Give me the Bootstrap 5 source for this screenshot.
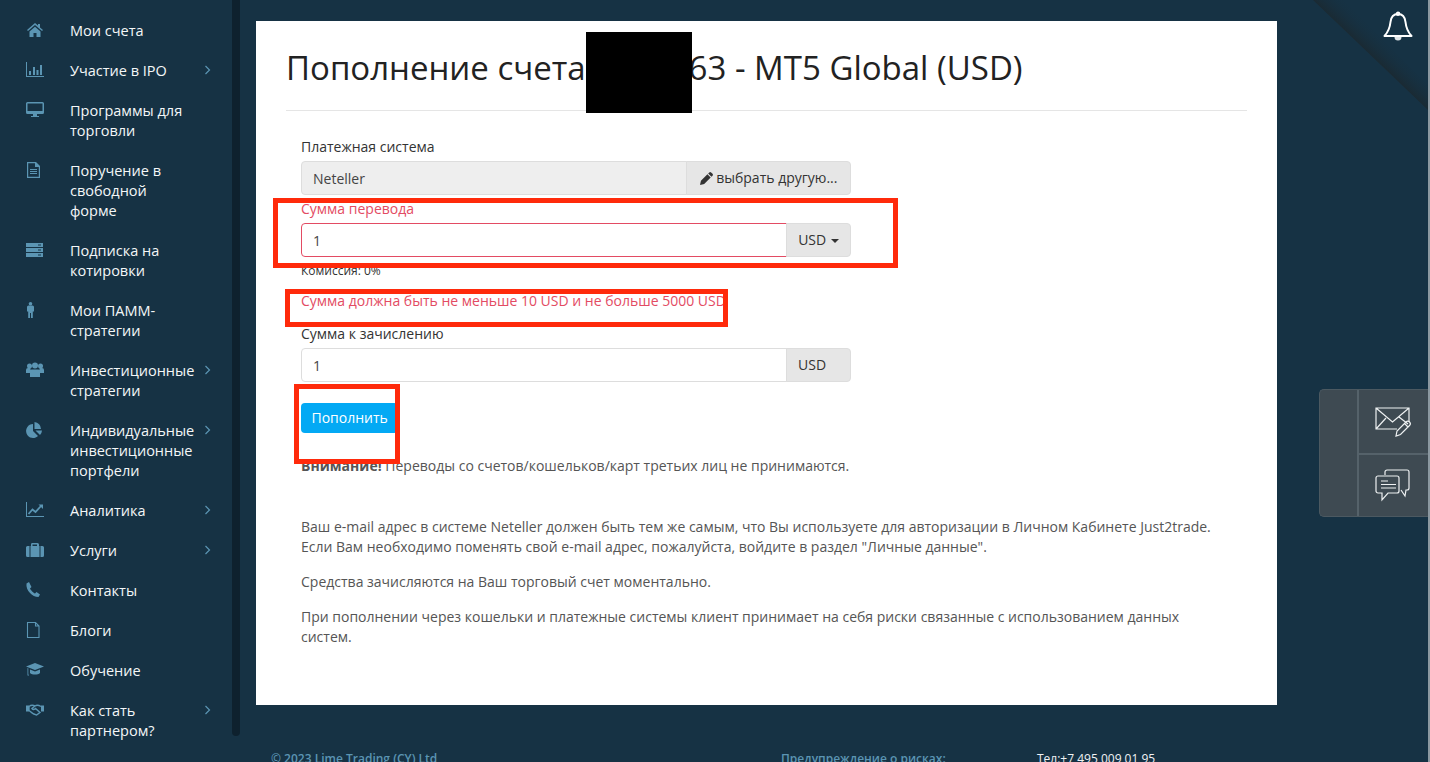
<!DOCTYPE html>
<html lang="ru">
<head>
  <meta charset="UTF-8" />
  <meta name="viewport" content="width=device-width, initial-scale=1" />
  <title>Пополнение счета</title>
  <link href="https://cdn.jsdelivr.net/npm/bootstrap@5.3.3/dist/css/bootstrap.min.css" rel="stylesheet" />
  <style>
    html, body { height: 762px; overflow: hidden; }
    body { background: #163244; font-family: "Open Sans", sans-serif; font-size: 14px; line-height: 20px; color: #333; }
    .app-shell { height: 762px; position: relative; overflow: hidden; border-right: 2px solid #8b98a0; }
    .side-col { width: 240px; height: 762px; flex: none; overflow: hidden; position: relative; }
    .side-list { list-style: none; margin: 0; padding: 11px 0 0; width: 232px; }
    .side-link { display: flex; padding: 10px 0 10px 26px; color: #f4f7f8; font-size: 14.5px; line-height: 20px; text-decoration: none; position: relative; }
    .side-ico { width: 44px; flex: none; color: #5b95b3; padding-top: 1px; }
    .side-ico svg { display: block; width: 18px; height: 16px; }
    .side-label { width: 126px; }
    .side-arrow { position: absolute; left: 204px; top: 14px; width: 7px; height: 10px; }
    .side-scroll { position: absolute; left: 232px; top: 0; width: 8px; height: 736px; background: #0e212e; border-radius: 0 0 4px 4px; }
    .main-col { flex: 1 1 auto; padding: 21px 151px 0 16px; }
    .pay-card { background: #fff; height: 684px; padding: 0 30px; position: relative; }
    .pay-title { font-family: "Open Sans", sans-serif; font-size: 33px; line-height: 46px; font-weight: 400; margin: 0; padding: 24px 0 19px; border-bottom: 1px solid #e5e5e5; color: #222; }
    .pay-form { width: 550px; margin: 0 0 0 15px; padding-top: 26px; }
    .pay-label { display: block; margin: 0 0 4px; line-height: 20px; }
    .pay-group { margin-bottom: 4px; }
    .pay-group .form-control, .pay-group .input-group-text, .pay-group .btn { font-size: 14px; line-height: 20px; height: 34px; padding: 6px 11px; border-radius: 4px; border-color: #ddd; }
    .pay-group .form-control { color: #444; box-shadow: none; }
    .pay-group .form-control[readonly] { background: #eee; }
    .pay-group .btn, .pay-group .input-group-text { background: #e6e6e6; color: #333; }
    .pay-pick { width: 165px; }
    .pay-cur { width: 65px; justify-content: flex-start; }
    .pay-red, .pay-red .pay-label { color: #e34b63; }
    .pay-group .pay-bad { border-color: #e34b63; }
    .pay-fee { font-size: 12px; line-height: 16px; margin: 6px 0 0; }
    .pay-error { color: #e34b63; margin: 12px 0 13px; }
    .pay-submit { background: #03a9f4; color: #fff; font-size: 14px; line-height: 20px; padding: 5px 10.5px; border: 0; border-radius: 4px; margin: 21px 0 23px; display: block; }
    .pay-note { color: #555; width: 915px; margin: 0 0 15px 15px; }
    .pay-gap { margin-top: 41px; }
    .pen-ico { width: 13px; height: 13px; vertical-align: -2px; }
    .caret-mark { display: inline-block; border-top: 4px solid #333; border-left: 4px solid transparent; border-right: 4px solid transparent; vertical-align: 2px; margin-left: 1px; }
    .mark-box { position: absolute; border: 5px solid #ff2a0b; pointer-events: none; }
    .mark-one { left: 17px; top: 177px; width: 625px; height: 70px; }
    .mark-two { left: 29px; top: 268px; width: 443px; height: 38px; }
    .mark-three { left: 38px; top: 363px; width: 106px; height: 80px; }
    .black-box { position: absolute; left: 330px; top: 11px; width: 106px; height: 81px; background: #000; }
    .foot-row { display: flex; font-size: 12px; line-height: 16px; font-weight: 600; color: #5b95b3; padding: 46px 0 0 15px; white-space: nowrap; }
    .foot-copy { width: 510px; }
    .foot-warn { width: 256px; }
    .foot-tel { color: #f0f3f5; font-weight: 400; }
    .corner-fold { position: absolute; right: 0; top: 0; width: 115px; height: 110px; pointer-events: none; }
    .bell-ico { position: absolute; left: 1383px; top: 11px; width: 30px; height: 32px; }
    .tool-box { position: absolute; left: 1319px; top: 389px; width: 109px; height: 128px; background: #3e4a52; border: 1px solid #4c5961; border-right: 0; border-radius: 5px 0 0 5px; display: flex; }
    .tool-edge { width: 39px; border-right: 2px solid #55626a; }
    .tool-btns { flex: 1 1 auto; display: flex; flex-direction: column; }
    .tool-btn { height: 63px; display: flex; align-items: center; justify-content: center; padding-right: 2px; }
    .tool-btn + .tool-btn { border-top: 2px solid #55626a; }
  </style>
</head>
<body>

<svg width="0" height="0" class="position-absolute">
  <symbol id="i-home" viewBox="0 0 18 16"><path fill="currentColor" d="M9 1 1 8l1 1 7-6 7 6 1-1-3-2.6V2h-2v1.6zM3.500 9.500 9 4.700l5.500 4.800V15h-4v-4h-3v4h-4z"/></symbol>
  <symbol id="i-bars" viewBox="0 0 18 16"><path fill="currentColor" d="M0 0h1v14h17v1H0zM3 9h2v4H3zM7 5h2v8H7zM10.500 8h2v5h-2zM14 3h2v10h-2z"/></symbol>
  <symbol id="i-screen" viewBox="0 0 18 16"><path fill="currentColor" fill-rule="evenodd" d="M1.500 0h15A1.500 1.500 0 0 1 18 1.500v9a1.500 1.500 0 0 1-1.500 1.500H11v2h2v1H5v-1h2v-2H1.500A1.500 1.500 0 0 1 0 10.500v-9A1.500 1.500 0 0 1 1.500 0zM1.500 1.500V9h15V1.500z"/></symbol>
  <symbol id="i-doc" viewBox="0 0 18 16"><path fill="currentColor" fill-rule="evenodd" d="M1 0h9l4 4v12H1zM2.200 1.200v13.600h10.600V5H9V1.200zM4 7h7v1H4zM4 9h7v1H4zM4 11h7v1H4z"/></symbol>
  <symbol id="i-rows" viewBox="0 0 18 16"><path fill="currentColor" fill-rule="evenodd" d="M0 1h17v4H0zM12 2.500v1h3v-1zM0 6h17v4H0zM12 7.500v1h3v-1zM0 11h17v4H0zM12 12.500v1h3v-1z"/></symbol>
  <symbol id="i-man" viewBox="0 0 18 16"><circle cx="4.500" cy="1.800" r="1.800" fill="currentColor"/><path fill="currentColor" d="M1 5a1.500 1.500 0 0 1 1.500-1.500h4A1.500 1.500 0 0 1 8 5v4.500H6.800V16H5v-5H4v5H2.200V9.500H1z"/></symbol>
  <symbol id="i-group" viewBox="0 0 18 16"><circle cx="3.500" cy="4" r="2.500" fill="currentColor"/><circle cx="14.500" cy="4" r="2.500" fill="currentColor"/><circle cx="9" cy="3.500" r="3" fill="currentColor"/><path fill="currentColor" d="M0 8a2 2 0 0 1 2-2h2.500v5H0zM13.500 6H16a2 2 0 0 1 2 2v3h-4.500zM5.500 7.500h7A1.500 1.500 0 0 1 14 9v6H4V9a1.500 1.500 0 0 1 1.500-1.500z"/></symbol>
  <symbol id="i-pie" viewBox="0 0 18 16"><path fill="currentColor" d="M7 2v7l5 5A7 7 0 1 1 7 2zM8.500 0a7 7 0 0 1 6.500 7H8.500zM9.500 8.500H16a7 7 0 0 1-2 4.500z"/></symbol>
  <symbol id="i-line" viewBox="0 0 18 16"><path fill="currentColor" d="M0 0h1v14h17v1H0z"/><path fill="none" stroke="currentColor" stroke-width="1.800" d="m2.500 12 4-4.500 3 2.500 5.500-6"/><path fill="currentColor" d="M12.500 2.500H17V7z"/></symbol>
  <symbol id="i-case" viewBox="0 0 18 16"><path fill="currentColor" fill-rule="evenodd" d="M6 1h5.500A1.500 1.500 0 0 1 13 2.500V4h3.500A1.500 1.500 0 0 1 18 5.500v8a1.500 1.500 0 0 1-1.500 1.500h-15A1.500 1.500 0 0 1 0 13.500v-8A1.500 1.500 0 0 1 1.500 4H5V2.500A1.500 1.500 0 0 1 6 1zM6.500 2.500V4h4.500V2.500zM3.500 4v11h1V4zM13.500 4v11h1V4z"/></symbol>
  <symbol id="i-phone" viewBox="0 0 18 16"><path fill="currentColor" d="M3 0 .5 1.500C0 5 1.500 8.500 4 11s5 4 8.500 4L14 12.500 10.500 10 9 11.500C7.500 11 4.500 8 4 6.500L5.500 5z"/></symbol>
  <symbol id="i-file" viewBox="0 0 18 16"><path fill="none" stroke="currentColor" stroke-width="1.100" d="M1.500.5h8l3.500 3.500v11.500H1.500zM9.500.5V4H13"/></symbol>
  <symbol id="i-cap" viewBox="0 0 18 16"><path fill="currentColor" d="M9 1 0 4.500l9 3.500 9-3.500zM4 7.500V11c2 2 8 2 10 0V7.500L9 9.500zM1.500 6v7.500H3V13l-.7-.5V6.300z"/></symbol>
  <symbol id="i-hands" viewBox="0 0 18 16"><path fill="none" stroke="currentColor" stroke-width="1.400" d="M3 4.500C5 3 7 3 9 4l-3 2.500c1 1.500 2.500 1 3.500 0l4.500 4-3.500 2.500c-3 0-5-2.500-7.500-4.500zM9 4c2-1.500 3.500-1 6 .5"/><path fill="currentColor" d="M0 3.500h3v6H0zM15 3.500h3v6h-3z"/></symbol>
  <symbol id="i-gift" viewBox="0 0 18 16"><path fill="currentColor" d="M1 4h6v3H1zM8 4h3v12H8zM12 4h5v3h-5zM2 8h5v8H2zM12 8h4v8h-4zM3.500 0 8 3.500H4.500A2 2 0 0 1 3.500 0zM14.500 0A2 2 0 0 1 13.500 3.500H10z"/></symbol>
  <symbol id="i-chev" viewBox="0 0 7 10"><path fill="none" stroke="#5b95b3" stroke-width="1.200" d="m1.500 1 4 4-4 4"/></symbol>
</svg>

<div class="app-shell d-flex">
  <aside class="side-col">
    <ul class="side-list" id="sideMenu"></ul>
    <div class="side-scroll"></div>
  </aside>

  <main class="main-col">
    <section class="pay-card">
      <h1 class="pay-title">Пополнение счета 1234563 - MT5 Global (USD)</h1>
      <div class="black-box"></div>

      <form class="pay-form">
        <label class="pay-label">Платежная система</label>
        <div class="input-group pay-group">
          <input class="form-control" type="text" value="Neteller" readonly />
          <button class="btn pay-pick" type="button">
            <svg class="pen-ico" viewBox="0 0 14 14"><path fill="#333" d="M10 .5a1.500 1.500 0 0 1 2 0l1.500 1.500a1.500 1.500 0 0 1 0 2L12.300 5.200 8.800 1.700zM8 2.500 11.500 6l-7 7L0 14l1-4.500z"/></svg>
            выбрать другую...
          </button>
        </div>

        <div class="pay-red mt-1">
          <label class="pay-label mb-1">Сумма перевода</label>
          <div class="input-group pay-group">
            <input class="form-control pay-bad" type="text" value="1" />
            <button class="btn pay-cur" type="button">USD <span class="caret-mark"></span></button>
          </div>
        </div>
        <p class="pay-fee">Комиссия: 0%</p>
        <p class="pay-error">Сумма должна быть не меньше 10 USD и не больше 5000 USD</p>

        <label class="pay-label">Сумма к зачислению</label>
        <div class="input-group pay-group">
          <input class="form-control" type="text" value="1" />
          <span class="input-group-text pay-cur">USD</span>
        </div>

        <button class="pay-submit" type="button">Пополнить</button>
      </form>

      <p class="pay-note"><b>Внимание!</b> Переводы со счетов/кошельков/карт третьих лиц не принимаются.</p>
      <p class="pay-note pay-gap">Ваш e-mail адрес в системе Neteller должен быть тем же самым, что Вы используете для авторизации в Личном Кабинете Just2trade. Если Вам необходимо поменять свой e-mail адрес, пожалуйста, войдите в раздел "Личные данные".</p>
      <p class="pay-note">Средства зачисляются на Ваш торговый счет моментально.</p>
      <p class="pay-note">При пополнении через кошельки и платежные системы клиент принимает на себя риски связанные с использованием данных систем.</p>

      <!-- annotation frames drawn over the form -->
      <div class="mark-box mark-one"></div>
      <div class="mark-box mark-two"></div>
      <div class="mark-box mark-three"></div>
    </section>

    <footer class="foot-row">
      <span class="foot-copy">© 2023 Lime Trading (CY) Ltd</span>
      <span class="foot-warn">Предупреждение о рисках:</span>
      <span class="foot-tel">Тел:+7 495 009 01 95</span>
    </footer>
  </main>

  <svg class="corner-fold" viewBox="0 0 115 110">
    <defs><linearGradient id="foldShade" x1="1" y1="0" x2="0" y2="1">
      <stop offset="0.35" stop-color="#163244" stop-opacity="0"/>
      <stop offset="0.5" stop-color="#1a2a33"/>
      <stop offset="0.65" stop-color="#163244" stop-opacity="0"/>
    </linearGradient></defs>
    <polygon points="0,0 30,0 115,85 115,110" fill="url(#foldShade)"/>
  </svg>

  <svg class="bell-ico" viewBox="0 0 30 32">
    <path fill="none" stroke="#fff" stroke-width="2" stroke-linejoin="round" d="M15 3c-5 0-7 3.500-7.500 8-.5 5-1.500 9-6 14h27c-4.500-5-5.500-9-6-14-.5-4.500-2.500-8-7.500-8z"/>
    <circle cx="15" cy="2.800" r="1.600" fill="none" stroke="#fff" stroke-width="1.400"/>
    <path fill="#dfe5e8" d="M11.500 26h7a3.500 3.500 0 0 1-7 0z"/>
  </svg>

  <div class="tool-box">
    <div class="tool-edge"></div>
    <div class="tool-btns">
      <div class="tool-btn">
        <svg width="36" height="32" viewBox="0 0 36 32" fill="none" stroke="#eef1f2" stroke-width="1.200">
          <path d="M22 23H1V2h33v14M1 2l16.500 14L34 2M1 23l10-11M24 11l9 7"/>
          <path d="m21 30 1-5 9-9c1-1 2.500-1 3.500 0s1 2.500 0 3.500l-9 9zM29.500 17.500l3.500 3.500"/>
        </svg>
      </div>
      <div class="tool-btn">
        <svg width="36" height="34" viewBox="0 0 36 34" fill="none" stroke="#eef1f2" stroke-width="1.200">
          <path d="M10 6V3a2 2 0 0 1 2-2h20a2 2 0 0 1 2 2v16a2 2 0 0 1-2 2h-1l-1 6-4-6"/>
          <path d="M3 7h19a2 2 0 0 1 2 2v13a2 2 0 0 1-2 2H13l-6 7v-7H3a2 2 0 0 1-2-2V9a2 2 0 0 1 2-2z"/>
          <path d="M6 12h7M6 15.500h15M6 19h15"/>
        </svg>
      </div>
    </div>
  </div>
</div>

<script>
const sideItems = [
  { ico: 'home', text: 'Мои счета' },
  { ico: 'bars', text: 'Участие в IPO', sub: true },
  { ico: 'screen', text: 'Программы для торговли' },
  { ico: 'doc', text: 'Поручение в свободной форме' },
  { ico: 'rows', text: 'Подписка на котировки' },
  { ico: 'man', text: 'Мои ПАММ-стратегии' },
  { ico: 'group', text: 'Инвестиционные стратегии', sub: true },
  { ico: 'pie', text: 'Индивидуальные инвестиционные портфели', sub: true },
  { ico: 'line', text: 'Аналитика', sub: true },
  { ico: 'case', text: 'Услуги', sub: true },
  { ico: 'phone', text: 'Контакты' },
  { ico: 'file', text: 'Блоги' },
  { ico: 'cap', text: 'Обучение' },
  { ico: 'hands', text: 'Как стать партнером?', sub: true },
  { ico: 'gift', text: 'Конкурсы' }
];

function renderSide() {
  const list = document.getElementById('sideMenu');
  sideItems.forEach(item => {
    const li = document.createElement('li');
    const arrow = item.sub ? '<svg class="side-arrow"><use href="#i-chev"/></svg>' : '';
    li.innerHTML = `
      <a class="side-link" href="#">
        <span class="side-ico"><svg><use href="#i-${item.ico}"/></svg></span>
        <span class="side-label">${item.text}</span>
        ${arrow}
      </a>
    `;
    list.appendChild(li);
  });
}

renderSide();
</script>
<script src="https://cdn.jsdelivr.net/npm/bootstrap@5.3.3/dist/js/bootstrap.bundle.min.js"></script>
</body>
</html>
